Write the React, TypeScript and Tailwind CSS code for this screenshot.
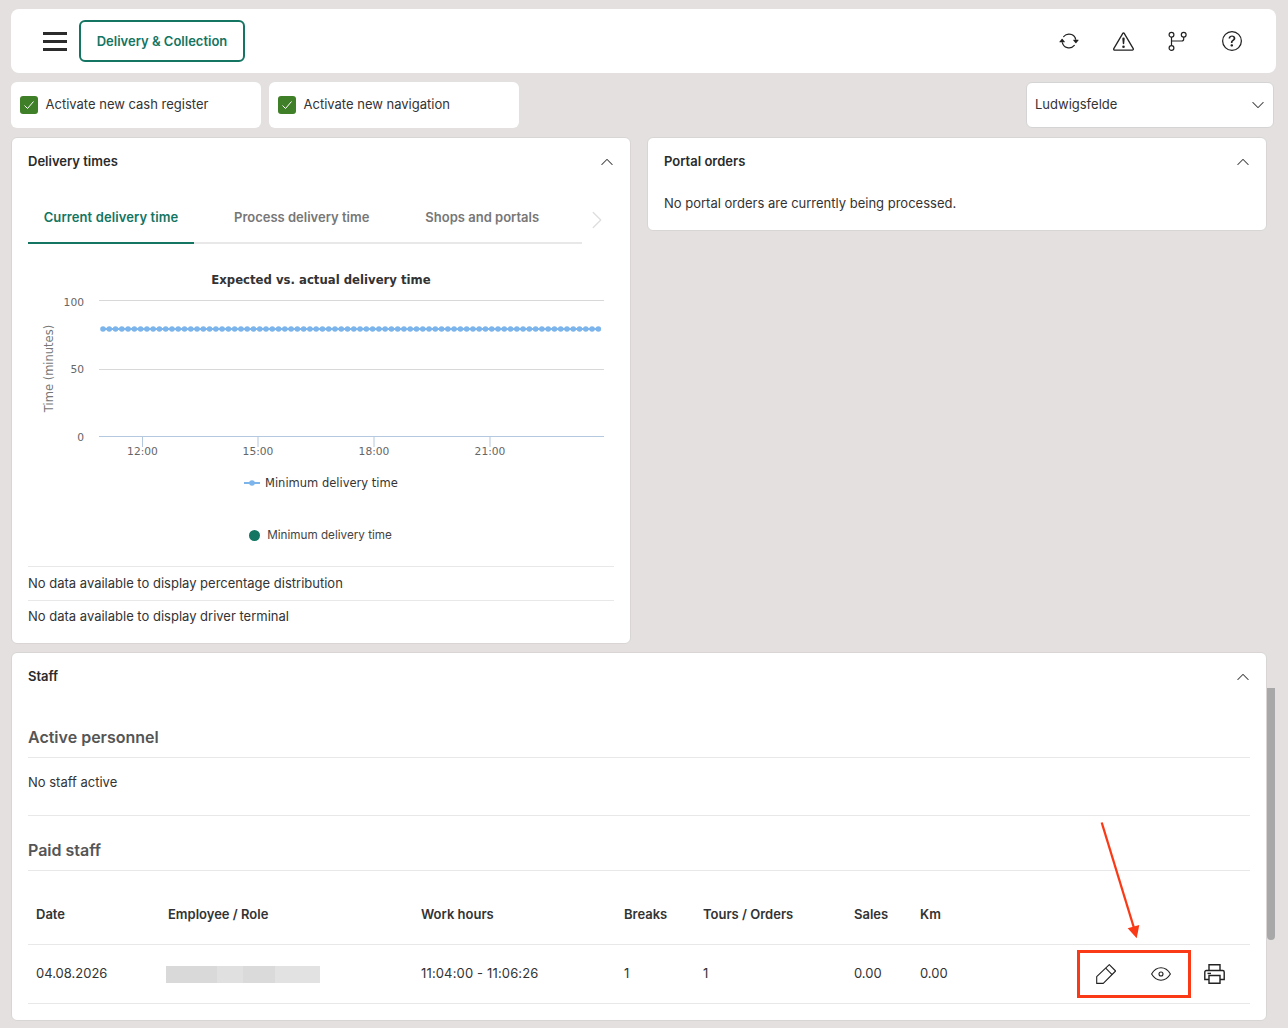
import {
  BsArrowRepeat,
  BsChevronDown,
  BsChevronRight,
  BsChevronUp,
  BsExclamationTriangle,
  BsQuestionCircle,
} from "react-icons/bs";

const chartFont = "DejaVu Sans, sans-serif";
const dots = Array.from({ length: 80 }, (_, i) => 103 + i * 6.27);
const ticks = [
  { x: 142.5, label: "12:00" },
  { x: 258, label: "15:00" },
  { x: 374, label: "18:00" },
  { x: 490, label: "21:00" },
];

function GitIcon() {
  return (
    <svg width="20" height="20" viewBox="0 0 20 20" fill="none" stroke="#222" strokeWidth="1.2">
      <circle cx="3.5" cy="3.7" r="2.4" />
      <circle cx="15.7" cy="3.7" r="2.4" />
      <circle cx="3.5" cy="17" r="2.4" />
      <path d="M3.5 6.1V14.6M15.7 6.1V8a2 2 0 0 1-2 2H3.5" />
    </svg>
  );
}

function PencilIcon() {
  return (
    <svg width="20" height="20" viewBox="0 0 20 20" fill="none" stroke="#222" strokeWidth="1.1" strokeLinejoin="round">
      <path d="M0.7 19.4V12.7L13.3 0.6L19.6 7L7.3 19.4Z" />
      <path d="M9.7 4.2L16.1 10.6" />
    </svg>
  );
}

function EyeIcon() {
  return (
    <svg width="20" height="20" viewBox="0 0 20 20" fill="none" stroke="#222" strokeWidth="1.1">
      <path d="M0.6 10C3 6 6.4 3.8 10 3.8S17 6 19.4 10C17 14 13.6 16.2 10 16.2S3 14 0.6 10Z" />
      <circle cx="10" cy="10" r="2" />
    </svg>
  );
}

function PrinterIcon() {
  return (
    <svg width="21" height="20" viewBox="0 0 21 20" fill="none" stroke="#222" strokeWidth="1.4">
      <path d="M5 6.5V0.8H16V6.5" />
      <path d="M5 15.5H0.8V8a1.5 1.5 0 0 1 1.5-1.5H18.7A1.5 1.5 0 0 1 20.2 8V15.5H16" />
      <path d="M5 11.5H16V19.2H5Z" />
      <path d="M3.5 9.4H7" />
    </svg>
  );
}

function Check({ label }: { label: string }) {
  return (
    <label className="flex h-[46px] w-[250px] items-center gap-2 rounded-md bg-white pl-[8.5px]">
      <span className="flex h-[18px] w-[18px] items-center justify-center rounded-[3px] bg-[#3f7f27]">
        <svg width="12" height="12" viewBox="0 0 12 12" fill="none" stroke="#fff" strokeWidth="1">
          <path d="M1.5 6.5L4.5 9.5L10.5 2.5" />
        </svg>
      </span>
      <span>{label}</span>
    </label>
  );
}

function PanelHead({ title }: { title: string }) {
  return (
    <div className="flex items-center justify-between">
      <span className="font-semibold text-[#2b2b2b]">{title}</span>
      <BsChevronUp size={14} className="mt-px text-[#444]" />
    </div>
  );
}

function Chart() {
  return (
    <svg width="586" height="235" viewBox="28 266 586 235" style={{ fontFamily: chartFont }}>
      <text x="321" y="284" textAnchor="middle" fontSize="11.7" fontWeight="700" fill="#333">
        Expected vs. actual delivery time
      </text>
      <line x1="99" x2="604" y1="300.5" y2="300.5" stroke="#d8d8d8" />
      <line x1="99" x2="604" y1="369.5" y2="369.5" stroke="#d8d8d8" />
      <line x1="99" x2="604" y1="436.5" y2="436.5" stroke="#b4c8e0" />
      {ticks.map((t) => (
        <g key={t.label}>
          <line x1={t.x} x2={t.x} y1="437" y2="447" stroke="#b4c8e0" />
          <text x={t.x} y="455" textAnchor="middle" fontSize="10.7" fill="#666">
            {t.label}
          </text>
        </g>
      ))}
      <text x="84" y="306" textAnchor="end" fontSize="10.7" fill="#666">100</text>
      <text x="84" y="373" textAnchor="end" fontSize="10.7" fill="#666">50</text>
      <text x="84" y="441" textAnchor="end" fontSize="10.7" fill="#666">0</text>
      <text x="0" y="0" transform="translate(53 368.5) rotate(-90)" textAnchor="middle" fontSize="11.5" fill="#777">
        Time (minutes)
      </text>
      <line x1="103" x2="600" y1="329" y2="329" stroke="#7cb5ec" strokeWidth="2" />
      {dots.map((x) => (
        <circle key={x} cx={x} cy="329" r="2.8" fill="#7cb5ec" />
      ))}
      <line x1="244" x2="260" y1="483" y2="483" stroke="#7cb5ec" strokeWidth="2" />
      <circle cx="252" cy="483" r="2.8" fill="#7cb5ec" />
      <text x="265" y="487" fontSize="11.5" fill="#333">Minimum delivery time</text>
    </svg>
  );
}

function DeliveryPanel() {
  return (
    <section className="h-[507px] w-[620px] rounded-md border border-[#d8d5d4] bg-white px-4 pt-[14px]">
      <PanelHead title="Delivery times" />
      <div className="mt-[22px] flex">
        <div className="flex h-[50px] w-[554px] gap-6 border-b-2 border-[#e8e8e8]">
          <button className="-mb-[2px] h-[50px] w-[166px] border-b-2 border-[#137562] font-semibold tracking-[0.1px] text-[#137562]">
            Current delivery time
          </button>
          <button className="px-4 font-semibold text-[#777]">Process delivery time</button>
          <button className="px-4 font-semibold text-[#777]">Shops and portals</button>
        </div>
        <BsChevronRight size={20} className="mt-4 ml-[5px] text-[#ddd]" />
      </div>
      <div className="mt-[22px] h-[235px]">
        <Chart />
      </div>
      <div className="mt-[26px] flex items-center justify-center gap-[7px] pr-px text-[11.7px]">
        <span className="h-[11px] w-[11px] rounded-full bg-[#137562]" />
        <span className="text-[#444]">Minimum delivery time</span>
      </div>
      <div className="mt-[22px] flex h-[34px] items-center border-t border-[#e8e8e8]">
        No data available to display percentage distribution
      </div>
      <div className="flex h-[33px] items-center border-t border-[#e8e8e8]">
        No data available to display driver terminal
      </div>
    </section>
  );
}

function PortalPanel() {
  return (
    <section className="h-[94px] w-[620px] rounded-md border border-[#d8d5d4] bg-white px-4 pt-[14px]">
      <PanelHead title="Portal orders" />
      <p className="mt-[22px]">No portal orders are currently being processed.</p>
    </section>
  );
}

function StaffTable() {
  return (
    <table className="w-full table-fixed border-collapse text-left">
      <colgroup>
        <col className="w-[132px]" />
        <col className="w-[253px]" />
        <col className="w-[203px]" />
        <col className="w-[79px]" />
        <col className="w-[151px]" />
        <col className="w-[66px]" />
        <col className="w-[130px]" />
        <col />
      </colgroup>
      <thead>
        <tr className="h-[74px] border-b border-[#e8e8e8] text-[#333]">
          <th className="pt-[14px] pl-2 font-semibold">Date</th>
          <th className="pt-[14px] pl-2 font-semibold">Employee / Role</th>
          <th className="pt-[14px] pl-2 font-semibold">Work hours</th>
          <th className="pt-[14px] pl-2 font-semibold">Breaks</th>
          <th className="pt-[14px] pl-2 font-semibold">Tours / Orders</th>
          <th className="pt-[14px] pl-2 font-semibold">Sales</th>
          <th className="pt-[14px] pl-2 font-semibold">Km</th>
          <th />
        </tr>
      </thead>
      <tbody>
        <tr className="h-[59px] border-b border-[#e8e8e8]">
          <td className="pl-2">04.08.2026</td>
          <td className="pl-[6px]">
            <div className="flex h-[17px] w-[154px]">
              <span className="w-[51px] bg-[#d9d9d9]" />
              <span className="w-[26px] bg-[#e0e0e0]" />
              <span className="w-[32px] bg-[#dadada]" />
              <span className="w-[45px] bg-[#e2e2e2]" />
            </div>
          </td>
          <td className="pl-2 tracking-[0.15px]">11:04:00 - 11:06:26</td>
          <td className="pl-2">1</td>
          <td className="pl-2">1</td>
          <td className="pl-2">0.00</td>
          <td className="pl-2">0.00</td>
          <td>
            <div className="flex items-center pl-[54px]">
              <PencilIcon />
              <span className="ml-[35px]">
                <EyeIcon />
              </span>
              <span className="ml-[33px]">
                <PrinterIcon />
              </span>
            </div>
          </td>
        </tr>
      </tbody>
    </table>
  );
}

function StaffPanel() {
  return (
    <section className="mt-2 h-[369px] w-[1256px] rounded-md border border-[#d8d5d4] bg-white px-4 pt-[14px]">
      <PanelHead title="Staff" />
      <div className="mt-[28px] h-[43px] border-b border-[#e8e8e8] pt-[10px] text-[16px] font-semibold text-[#555]">
        Active personnel
      </div>
      <div className="flex h-[58px] items-center border-b border-[#e8e8e8] pb-[7px]">No staff active</div>
      <div className="flex h-[55px] items-center border-b border-[#e8e8e8] pt-[15px] text-[16px] font-semibold text-[#555]">
        Paid staff
      </div>
      <StaffTable />
    </section>
  );
}

export default function App() {
  return (
    <div
      className="relative h-[1028px] w-[1288px] overflow-hidden bg-[#e3e0df] pt-[9px] pl-[11px] text-[13px] text-[#333]"
      style={{ fontFamily: "Inter, sans-serif" }}
    >
      <header className="flex h-[64px] w-[1265px] items-center rounded-lg bg-white">
        <div className="ml-8 flex w-[24px] flex-col gap-[5px]">
          <span className="h-[3px] bg-[#2b2b2b]" />
          <span className="h-[3px] bg-[#2b2b2b]" />
          <span className="h-[3px] bg-[#2b2b2b]" />
        </div>
        <button className="ml-3 h-[42px] w-[166px] rounded-md border-2 border-[#137562] pt-px font-semibold text-[#137562]">
          Delivery &amp; Collection
        </button>
        <div className="mr-[34px] ml-auto flex items-center gap-[34px] text-[#222]">
          <BsArrowRepeat size={20} />
          <BsExclamationTriangle size={21} />
          <GitIcon />
          <BsQuestionCircle size={20} />
        </div>
      </header>

      <div className="mt-[9px] flex w-[1263px] items-center gap-2">
        <Check label="Activate new cash register" />
        <Check label="Activate new navigation" />
        <div className="ml-auto flex h-[46px] w-[248px] items-center justify-between rounded-md border border-[#d4d4d4] bg-white pr-2 pl-2">
          <span>Ludwigsfelde</span>
          <BsChevronDown size={14} className="text-[#444]" />
        </div>
      </div>

      <div className="mt-[9px] flex items-start gap-4">
        <DeliveryPanel />
        <PortalPanel />
      </div>

      <StaffPanel />

      {/* scrollbar thumb */}
      <div className="absolute top-[688px] left-[1267px] h-[252px] w-2 rounded-b bg-[#a8a8a8]" />

      {/* red annotation over the action icons */}
      <div className="pointer-events-none absolute top-[950px] left-[1077px] h-[48px] w-[114px] border-[3px] border-[#fa3a16]" />
      <svg className="pointer-events-none absolute top-[815px] left-[1095px]" width="50" height="130" viewBox="0 0 50 130">
        <path d="M6.7 7.5L39 113" stroke="#fa3a16" strokeWidth="2.3" />
        <path d="M32.7 113.3L44.3 110L41.7 123.3Z" fill="#fa3a16" />
      </svg>
    </div>
  );
}
